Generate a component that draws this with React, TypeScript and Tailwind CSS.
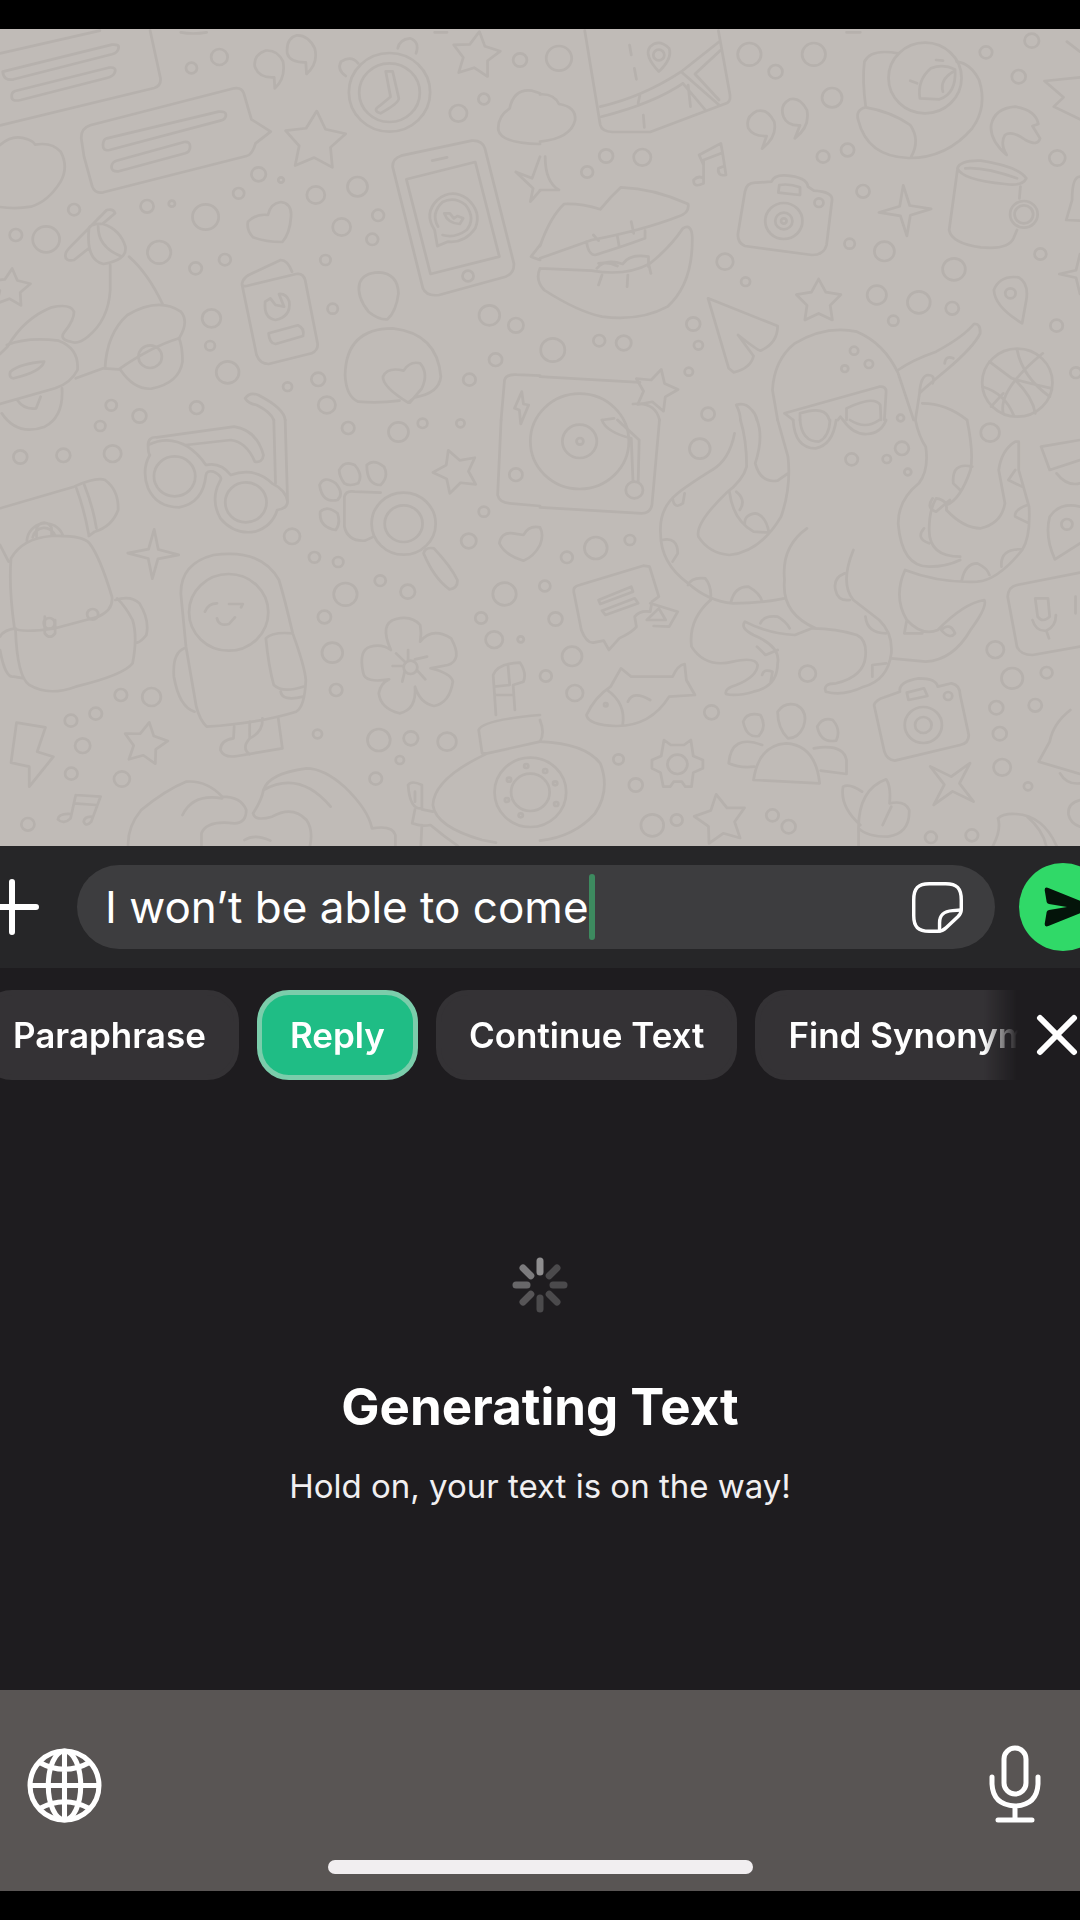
import { FC } from "react"
import { clsx } from "clsx"

type TDot = [number, number, number]
type TShape = [number, number, number, number]

type TTile = {
  x: number
  y: number
  dots: TDot[]
  stars: TShape[]
  sparkles: TShape[]
  paths: string[]
}

const starPath = ([cx, cy, r, rot]: TShape) => {
  const points = Array.from({ length: 10 }, (_, i) => {
    const angle = ((i * 36 + rot - 90) * Math.PI) / 180
    const radius = i % 2 ? r * 0.52 : r
    return `${cx + radius * Math.cos(angle)} ${cy + radius * Math.sin(angle)}`
  })
  return `M${points.join("L")}Z`
}

const sparklePath = ([cx, cy, r, rot]: TShape) => {
  const points = Array.from({ length: 8 }, (_, i) => {
    const angle = ((i * 45 + rot - 90) * Math.PI) / 180
    const radius = i % 2 ? r * 0.27 : r
    return `${cx + radius * Math.cos(angle)} ${cy + radius * Math.sin(angle)}`
  })
  return `M${points.join("L")}Z`
}

// wallpaper doodles, four tiles of 1568 x 1260 units
const tiles: TTile[] = [
  {
    x: 0,
    y: 0,
    dots: [
      [556, 204, 16], [637, 171, 24], [1331, 340, 25], [1405, 297, 16], [1510, 180, 20], [751, 523, 21],
      [816, 540, 8], [693, 580, 16], [917, 585, 26], [1038, 560, 29], [499, 611, 9], [427, 619, 19],
      [215, 629, 17], [46, 705, 18], [134, 718, 39], [597, 651, 38], [462, 757, 34], [992, 681, 26],
      [1098, 646, 17], [1081, 718, 17], [568, 805, 18], [653, 779, 17], [945, 780, 15], [614, 955, 27],
      [966, 926, 15], [610, 1037, 14], [661, 1117, 33], [924, 1138, 20], [835, 1160, 13], [949, 1215, 25],
      [1421, 946, 30], [1498, 976, 22], [1439, 1079, 19], [1363, 1139, 18], [323, 1216, 16], [571, 1223, 19],
      [405, 1248, 20], [436, 1070, 34], [1131, 277, 118], [1131, 278, 88], [1359, 828, 16],
    ],
    stars: [[915, 425, 92, 3], [1382, 166, 72, 8], [30, 865, 60, 5]],
    sparkles: [],
    paths: [
      "M0 160L290 92M436 92L466 235Q468 258 448 264L0 376",
      "M8 215L325 134Q348 132 344 145Q342 158 325 163L40 238Q10 244 8 215ZM44 273L315 203Q342 200 332 220Q328 230 310 234L60 300Q34 306 34 290Q33 277 44 273Z",
      "M236 415Q235 385 262 376L680 265Q702 262 708 280L730 358L786 395L742 430Q732 465 716 468L300 577Q276 582 268 560L244 470Z",
      "M310 415L635 335Q656 333 656 345Q656 358 640 362L318 450Q298 454 299 435Q300 418 310 415ZM338 482L535 426Q552 424 552 440Q552 455 538 460L345 514Q322 516 324 498Q326 486 338 482Z",
      "M0 435Q38 400 80 418Q96 424 102 434Q150 425 176 455Q200 500 176 545Q140 605 90 620Q45 628 0 621",
      "M798 265Q830 235 822 185Q805 148 770 152Q735 165 740 200Q752 235 796 232ZM890 222Q925 190 914 145Q895 105 862 106Q830 115 834 160Q842 188 888 187Z",
      "M1040 190Q1020 165 990 185Q978 210 1004 228M1155 145Q1160 118 1190 115Q1220 125 1208 160M1120 214H1140L1158 295Q1158 310 1105 340Q1080 332 1102 318L1134 290Z",
      "M1140 500Q1140 475 1165 467L1370 422Q1400 420 1408 445L1492 790Q1494 820 1468 830L1275 885Q1238 890 1228 865ZM1180 538L1380 486L1450 770L1250 822ZM1255 482L1298 472",
      "M1270 738L1262 690Q1230 640 1270 600Q1310 565 1355 595Q1400 635 1380 685Q1350 730 1300 725ZM1272 680Q1250 640 1285 606Q1320 588 1352 615Q1382 655 1355 690Q1320 716 1285 705",
      "M1290 640Q1300 670 1335 672L1345 655L1328 648L1318 655L1306 640Z",
      "M1568 432Q1455 430 1447 390Q1444 350 1480 325Q1492 265 1545 272L1568 280",
      "M720 665Q745 640 778 645Q785 610 815 606Q848 610 845 650Q842 700 820 726Q770 726 735 712Q715 690 720 665Z",
      "M703 855L745 1065Q755 1092 780 1092L905 1060Q925 1050 922 1030L886 840Q880 818 860 822L716 858Q702 860 703 850Q706 835 722 825L815 780Q835 780 848 815",
      "M770 905Q765 955 800 960Q845 950 840 905Q832 880 810 882L825 920L800 915L785 895ZM780 1000L865 976Q885 985 880 1008L800 1032Q782 1030 780 1000Z",
      "M1100 817Q1155 820 1157 880Q1150 935 1125 958Q1100 960 1070 935Q1035 890 1044 850Q1055 818 1100 817Z",
      "M1040 1205Q1005 1190 1002 1125Q1005 985 1140 985Q1270 1000 1280 1130Q1275 1180 1205 1192L1185 1208Q1110 1160 1112 1130Q1125 1100 1172 1112Q1190 1082 1220 1090Q1245 1120 1225 1165L1190 1208M1040 1205Q1100 1210 1160 1202",
      "M190 765Q190 755 205 740L310 630Q330 625 334 640L300 670M190 765Q188 785 215 780L258 745M258 690Q250 780 300 792Q370 780 364 740Q350 690 300 672Q255 670 258 690ZM285 680Q285 740 350 768",
      "M320 795V870Q315 960 255 1010Q225 1035 205 1025Q170 1018 188 995Q215 960 215 935Q205 910 150 922Q70 955 22 1040L0 1062M375 770Q430 820 472 912M305 1105Q310 1000 370 945Q460 890 525 935Q550 965 520 1015Q440 1040 345 1108L300 1105L220 1135",
      "M20 1035Q80 1010 170 1022Q230 1045 225 1110Q205 1150 160 1165L0 1212M30 1115Q60 1090 128 1085Q120 1115 40 1135Q25 1135 30 1115ZM350 1110Q390 1170 440 1166Q520 1150 530 1085Q530 1040 520 1015M180 1165Q185 1250 130 1280Q50 1310 5 1240M50 1200Q70 1230 105 1225L118 1190",
      "M712 1195Q725 1175 750 1185Q825 1225 828 1260M712 1195Q720 1210 745 1215Q785 1235 795 1260",
      "M1455 1260L1465 1140Q1470 1122 1500 1124L1568 1127M1515 1175L1494 1225L1508 1230L1512 1272L1535 1215L1520 1212Z",
      "M1498 516L1545 535L1568 470M1498 516L1548 565L1540 605L1568 572M1568 735L1542 770L1568 780",
      "M525 97Q560 104 600 97M1262 97H1298",
    ],
  },
  {
    x: 1568,
    y: 0,
    dots: [
      [55, 175, 37], [192, 468, 20], [137, 516, 17], [297, 472, 25], [608, 163, 34], [684, 215, 20],
      [795, 163, 34], [848, 293, 29], [822, 470, 18], [893, 450, 19], [938, 574, 19], [899, 731, 15],
      [1000, 754, 29], [537, 785, 24], [597, 845, 13], [1202, 808, 33], [978, 885, 28], [1100, 907, 33],
      [1197, 925, 19], [1026, 962, 15], [1502, 474, 23], [1453, 762, 17], [1428, 122, 21], [1295, 157, 18],
      [1390, 230, 20], [1500, 977, 18], [445, 972, 20], [172, 1022, 17], [243, 1029, 22], [37, 1050, 35],
      [460, 1036, 13], [432, 1115, 12], [488, 1242, 19], [1556, 1118, 16], [1118, 234, 106], [708, 663, 54],
      [708, 663, 25], [708, 663, 8], [810, 608, 13], [1405, 643, 40], [1405, 643, 27], [1386, 1148, 102],
      [345, 165, 16], [1366, 880, 15], [912, 1052, 12], [885, 1106, 10], [955, 1092, 12], [1047, 1254, 10],
    ],
    stars: [[809, 905, 68, 0], [335, 1172, 66, 15]],
    sparkles: [[1060, 632, 76, -4], [1568, 822, 60, 0]],
    paths: [
      "M130 92L175 375Q180 395 210 396H320L545 308Q556 300 550 275L518 92M175 320Q300 290 410 215L520 125M178 350Q330 310 415 250M415 250L480 330M410 215L520 315M525 150L450 222L520 300M260 135L265 165M274 205L280 238M300 345L303 382M430 255L437 320M290 285L285 310",
      "M345 215Q300 165 320 140Q345 115 375 145Q385 175 345 215Z",
      "M0 283Q40 280 55 312Q105 320 102 360Q90 415 0 425M15 470Q15 545 55 570H0",
      "M1040 160Q960 145 942 185Q935 240 946 322Q915 330 924 360Q950 470 1070 474Q1180 475 1255 385Q1300 320 1275 240Q1250 190 1210 185M946 322Q1020 335 1075 375Q1105 420 1078 470M1103 295Q1095 240 1135 205Q1170 190 1205 208Q1210 280 1160 298ZM1170 275Q1160 240 1200 215M1075 242L1095 250M1150 180L1170 182",
      "M645 446Q690 410 680 365Q660 325 630 333Q595 350 605 385Q620 410 658 408ZM740 415Q785 380 775 330Q755 290 725 298Q695 315 707 350Q718 378 755 376Z",
      "M475 550V480L530 458L540 525M475 550Q445 565 446 540Q460 525 475 535M462 465L525 430L530 458M462 465L475 495M540 525Q515 530 518 505L530 500",
      "M0 738Q30 650 70 612Q120 610 175 628Q205 590 235 562Q330 565 430 612Q435 640 400 650Q300 690 150 720L0 775M0 805L150 812Q250 830 320 790Q380 740 415 685Q440 670 442 710Q445 850 370 920Q290 965 180 950Q110 935 12 870Q-15 840 0 805M135 725Q140 765 160 765Q240 740 305 715V692M225 710L230 740M265 665L272 700M155 705L170 722M165 805Q190 775 240 792Q260 760 315 770V800M180 825L170 855M255 825L253 860M315 790L322 820M170 790Q200 785 225 798",
      "M595 575Q600 545 630 548L672 545Q680 525 710 526Q775 530 778 560L795 572Q850 575 848 600L832 735Q825 765 790 765L595 738Q572 728 575 700ZM695 555Q725 550 755 562V585L692 578Z",
      "M1310 375Q1320 325 1380 320Q1440 330 1447 372L1430 378L1452 415Q1445 440 1410 420Q1370 390 1350 405Q1335 430 1355 465Q1305 420 1310 375Z",
      "M1212 505Q1220 480 1280 482Q1390 500 1412 535Q1400 560 1350 552Q1225 540 1212 505ZM1235 505Q1290 500 1385 535M1212 510L1188 690Q1195 730 1280 742Q1360 750 1375 715L1385 690M1395 560L1392 595",
      "M1568 530Q1545 530 1545 600L1528 660L1568 662M1568 232L1465 243L1520 292L1492 320L1568 358M1530 125L1568 155",
      "M488 895L690 978Q690 1030 640 1052Q630 1050 575 1005L620 1068Q612 1105 562 1117L548 1105Z",
      "M1400 970Q1320 920 1318 870Q1335 825 1390 832Q1420 850 1412 900Z",
      "M690 1260L675 1170Q680 1080 740 1030Q830 975 920 995Q1000 1030 1040 1120L1085 1260M710 1240L985 1160Q1005 1158 1005 1175L1000 1260M710 1240L735 1260M755 1260V1240Q830 1215 840 1260M890 1260V1225Q970 1185 988 1215L990 1260M865 1260L872 1250L880 1260",
      "M1040 1110Q1080 1080 1150 1055Q1230 1010 1260 972Q1280 970 1278 1000Q1260 1040 1180 1110Q1110 1170 1102 1180Q1105 1130 1125 1125Q1150 1125 1140 1150M1175 1090Q1178 1065 1200 1075M1102 1180L1090 1260M1110 1210Q1180 1210 1240 1260",
      "M1305 1085L1370 1135Q1400 1145 1485 1165M1385 1048Q1400 1130 1480 1190M1345 1240Q1330 1170 1460 1060M1285 1160Q1350 1180 1375 1245M1380 1140Q1430 1190 1438 1240M1310 1220L1345 1180",
      "M0 1130L290 1147M270 1212Q335 1205 347 1260M570 1215Q595 1205 615 1230Q628 1245 630 1260M570 1215Q582 1240 582 1260M180 1260L215 1255M890 97H930",
    ],
  },
  {
    x: 0,
    y: 1260,
    dots: [
      [291, 18, 15], [59, 111, 20], [184, 106, 20], [327, 101, 25], [1011, 24, 18], [1157, 36, 29],
      [1227, 10, 14], [1337, 10, 12], [1498, 164, 19], [848, 349, 23], [913, 412, 16], [982, 426, 15],
      [1003, 523, 34], [1104, 482, 16], [1184, 515, 21], [1361, 363, 22], [1405, 275, 15], [942, 591, 19],
      [965, 698, 30], [976, 810, 18], [1465, 522, 34], [1397, 594, 17], [1435, 659, 25], [1512, 658, 9],
      [351, 825, 18], [440, 831, 27], [278, 881, 18], [206, 902, 18], [240, 977, 22], [207, 1061, 18],
      [354, 1077, 23], [81, 1213, 19], [922, 942, 13], [1100, 960, 33], [1193, 955, 21], [1298, 965, 27],
      [1161, 1020, 12], [1091, 1076, 18], [507, 169, 60], [714, 247, 60], [1172, 311, 55], [1172, 311, 93],
      [664, 577, 115], [269, 583, 16], [1192, 742, 20], [143, 610, 16],
      // rotary dial
      [1540, 1117, 104], [1540, 1117, 56], [1528, 1038, 6], [1478, 1079, 6], [1472, 1140, 6], [1512, 1186, 6],
    ],
    stars: [[1325, 155, 68, -20], [422, 972, 66, 10]],
    sparkles: [[445, 402, 74, 2]],
    paths: [
      "M430 75Q430 50 455 52L680 20Q745 30 765 105Q762 130 740 125Q715 65 670 60L540 75M430 75Q430 100 435 105Q410 150 430 205Q455 262 520 262Q590 250 598 165Q600 150 620 155Q650 170 638 185Q610 240 640 295Q680 345 740 335Q790 320 805 270Q835 265 835 245L828 0M430 75Q490 45 545 80Q575 100 598 135Q640 125 670 165Q740 140 790 190Q830 210 835 245M795 0L800 190",
      "M0 265L215 200Q280 170 305 180Q345 210 343 270Q325 320 275 335L258 348M222 205Q245 270 258 345M245 195Q270 260 280 325M78 362A54 56 0 0 1 182 345M95 352A34 36 0 0 1 160 347M106 350V330A22 22 0 0 1 150 330V347",
      "M32 415Q65 355 150 348Q240 345 260 370Q290 410 325 530Q330 570 285 590L160 625Q60 640 42 625Q25 500 32 415ZM45 630Q50 770 85 795Q140 830 220 800Q360 765 385 730Q400 650 385 600Q365 560 340 535M335 540Q380 525 405 550Q435 600 425 645Q410 665 398 668M45 625Q10 630 0 650M0 690Q15 775 40 770L70 775M0 375L25 425M130 590V640Q145 660 160 640V600",
      "M525 520Q525 430 620 405Q760 385 810 480Q825 530 850 640Q885 740 888 780Q885 860 860 875Q750 910 600 920Q580 900 570 860L540 680ZM535 685Q500 700 505 770Q520 860 565 875M850 640Q790 635 772 655Q780 740 795 795Q820 820 880 800M815 815Q820 845 880 830M595 575Q605 550 630 550M665 552H705L700 562M630 595Q635 620 665 612L682 592M680 920L678 955Q640 960 640 990Q650 1015 690 1008L820 985L808 895M725 905V955Q765 935 762 895M725 955Q700 985 725 1003",
      "M1000 230Q1005 210 1030 215L1105 218M1000 230V320Q1010 365 1060 362L1085 350M985 150Q1000 120 1030 135Q1055 165 1040 190Q1015 200 1000 190Q985 170 985 150ZM1065 135Q1085 115 1115 140Q1130 170 1105 195Q1065 195 1065 135ZM928 195Q940 165 975 190Q1000 220 980 240Q935 250 928 195ZM930 275Q950 255 980 280Q990 310 975 330Q925 320 930 275ZM1230 400Q1235 380 1260 385Q1310 440 1328 480Q1330 505 1305 508Q1260 475 1230 400Z",
      "M1135 690Q1100 610 1150 597Q1195 585 1220 615Q1225 640 1220 665Q1255 620 1310 655Q1345 720 1300 735L1250 745Q1310 760 1315 785Q1305 850 1260 858Q1220 850 1205 800Q1210 870 1160 880Q1105 865 1100 820Q1105 790 1130 778Q1060 790 1055 760Q1040 690 1075 680Q1110 670 1135 690ZM1185 690V720M1205 718L1240 710M1212 752L1235 778M1175 755L1168 785M1140 738H1170M1150 700L1178 728",
      "M1450 370Q1455 335 1490 340L1520 345Q1535 315 1568 322Q1580 345 1568 375Q1550 410 1520 422Q1465 405 1450 370ZM1455 0L1445 225Q1450 248 1480 250L1568 258",
      "M48 908L132 922L108 995L155 1010L85 1100V1040L32 1028ZM220 1125L292 1130L265 1205Q250 1222 243 1205Q245 1190 265 1190M220 1125L205 1195Q185 1215 168 1198Q170 1180 205 1182M215 1150L280 1155",
      "M372 1278Q370 1220 410 1170Q480 1110 540 1085Q600 1080 645 1130Q700 1130 715 1170Q715 1210 680 1210Q600 1200 585 1240V1278M645 1135Q560 1120 530 1185M735 1180Q760 1140 765 1110Q780 1060 890 1045Q940 1045 1000 1100Q1070 1170 1080 1225Q1140 1215 1148 1245V1278M765 1110Q870 1050 960 1160M735 1180Q740 1205 790 1190Q850 1155 890 1200Q910 1230 900 1278M710 1260Q740 1240 785 1262",
      "M1440 885L1432 765Q1445 730 1510 728Q1530 760 1520 785L1490 795L1495 870M1475 735L1480 795L1435 800M1440 825H1490M1390 930Q1400 900 1568 885M1390 930L1400 1000L1415 1000L1568 965M1415 1000Q1260 1075 1257 1155Q1265 1220 1400 1260L1440 1268M1185 1095Q1195 1080 1225 1095V1165Q1190 1170 1185 1095ZM1205 1115V1145M1205 1168L1197 1210Q1220 1220 1250 1215Q1290 1250 1330 1278M1257 1175L1225 1168M1225 1215L1222 1278",
    ],
  },
  {
    x: 1568,
    y: 1260,
    dots: [
      [115, 64, 50], [116, 64, 10], [115, 64, 143], [464, 86, 30], [905, 118, 18], [1007, 117, 12], [1051, 85, 20],
      [1068, 156, 10], [1307, 38, 27], [162, 384, 33], [261, 360, 15], [78, 412, 17], [14, 498, 16],
      [45, 597, 20], [93, 709, 29], [101, 819, 24], [17, 768, 17], [498, 877, 21], [228, 1018, 15],
      [278, 1095, 20], [326, 1216, 33], [397, 1200, 17], [675, 1186, 18], [722, 1220, 20], [777, 761, 24],
      [1322, 689, 25], [1371, 775, 31], [1471, 758, 17], [1325, 863, 20], [1438, 856, 19], [1335, 941, 20],
      [1342, 1042, 25], [1417, 1099, 12], [1135, 1252, 17], [1254, 1246, 18], [1113, 915, 54], [1113, 915, 24],
      [1185, 828, 12], [399, 1033, 29], [1530, 313, 16], [15, 1053, 6], [44, 1090, 6], [47, 1152, 6], [191, 854, 5],
      [274, 210, 25],
    ],
    stars: [[525, 1200, 78, -10]],
    sparkles: [[1196, 1092, 82, 40]],
    paths: [
      "M347 0L325 255Q320 280 295 280L0 262M180 0Q190 35 265 55L270 185M225 0L288 60L285 185",
      "M565 40Q550 120 500 150Q430 195 400 220Q345 265 350 340Q350 430 430 490Q490 545 560 550Q640 550 710 535M582 0Q600 60 600 140Q590 180 540 220Q450 310 460 350Q490 400 550 405Q640 395 700 290Q730 200 720 110L690 0M630 0Q650 50 625 130Q640 190 690 182L720 160M550 215Q560 300 620 335L665 338Q655 285 625 280Q590 285 595 315M570 215Q600 240 580 270M385 235Q390 270 415 250L420 220M355 360Q400 350 400 400L385 425M430 495Q440 470 480 475Q500 500 495 540M555 545Q565 500 605 500Q640 520 645 545",
      "M775 325Q700 380 710 480Q700 580 800 625M910 390Q870 490 910 540L985 600Q1025 640 1020 700Q1010 780 940 800Q880 830 830 815Q820 790 860 790Q940 770 945 710Q950 660 920 645Q860 625 790 625L740 645Q660 640 595 605Q580 625 620 645Q700 680 690 730Q690 800 620 815Q570 830 540 822Q535 805 570 795Q630 770 632 735Q625 710 560 725Q480 745 440 680Q430 600 495 540M640 610Q650 585 690 590Q715 605 725 625M885 460Q850 475 858 510Q865 545 900 540M945 590Q950 640 1005 640M630 680L655 705L690 690M645 765Q650 745 675 755L670 785M965 770V735L1005 730",
      "M1090 0Q1100 50 1120 80Q1130 150 1100 190Q1040 240 1040 310Q1050 440 1130 440Q1180 440 1220 420M1220 410Q1130 410 1130 330Q1130 270 1150 235Q1185 240 1180 270Q1230 325 1280 325Q1340 310 1350 250L1332 150Q1340 90 1380 65L1390 65V150L1420 260Q1425 350 1400 390Q1330 480 1270 485Q1160 490 1060 450Q1025 530 1065 600Q1110 650 1155 630Q1230 550 1290 540Q1300 560 1250 630Q1200 720 1120 725L1020 715M1240 0Q1260 100 1250 150Q1220 240 1180 255M1255 140Q1195 125 1200 190L1220 210M1225 480Q1235 430 1270 430Q1300 445 1305 465M1340 440Q1335 385 1400 388M1415 255Q1375 270 1380 290L1420 310M1115 325Q1090 355 1130 370M1058 640L1065 600M1058 640H1110M1165 630Q1190 605 1205 640Q1190 660 1165 630M1380 150L1360 180L1400 200M1140 235Q1120 265 1150 275L1190 240",
      "M735 0Q740 85 800 85Q850 75 860 0M755 0Q760 65 810 65Q840 50 842 0M880 0Q910 45 950 42Q990 40 1005 0M900 0Q945 30 985 0",
      "M1455 80L1568 60M1455 80L1480 150L1568 120M1500 160Q1530 200 1568 190M1495 418Q1465 350 1480 290Q1510 245 1568 260M1495 418Q1530 395 1568 370M1358 530Q1360 500 1385 495L1568 458M1358 530L1385 680Q1395 705 1430 705L1568 680M1438 535H1475L1480 590Q1460 610 1445 590ZM1430 600Q1440 635 1470 632Q1498 620 1498 585M1470 632L1478 655M1555 530V580",
      "M98 515L120 630Q135 670 155 668L185 662L200 690L230 655Q270 635 280 620L275 590Q290 570 320 575L325 545L345 530L318 440L300 437L115 495Q95 500 98 515ZM170 540L265 500L270 515L175 552ZM180 572L275 535L285 550L190 585ZM320 550L400 575L375 620L330 618M310 600L345 565L365 600Z",
      "M135 885Q160 830 205 800L235 745L265 770L385 770Q400 735 420 732L425 780L450 825L375 830Q320 920 220 918Q140 915 135 885ZM195 810Q250 850 240 915M255 845Q270 810 320 840",
      "M360 960L380 975H418L438 960L445 1008L473 1020V1045L445 1058L440 1100H422L412 1085H388L378 1100H358L350 1058L325 1045V1020L352 1008Z",
      "M0 965Q130 970 175 1030Q205 1110 160 1180Q100 1250 0 1262M0 900Q15 940 0 965",
      "M690 875Q710 845 745 855Q780 875 765 920Q750 955 720 955Q690 925 690 875ZM590 905Q600 875 640 885Q660 920 635 948Q600 955 590 905ZM805 920Q820 890 850 900Q875 930 860 962Q815 970 805 920ZM620 1080Q635 975 715 970Q800 975 812 1090ZM645 975Q555 940 548 1030Q580 1045 622 1040M795 985Q880 970 890 1020V1062L815 1052",
      "M970 855Q975 840 1000 832L1045 815Q1040 785 1100 775Q1150 775 1155 800L1195 790Q1220 795 1220 825L1245 945Q1245 970 1220 975L1030 1022Q1008 1020 1000 995ZM1065 818L1115 805L1125 828L1070 840Z",
      "M1540 870Q1490 910 1480 965L1448 1025L1568 1062M1510 1060Q1530 1095 1568 1090M1568 1140Q1530 1150 1535 1185Q1540 1210 1568 1220",
      "M930 1215Q870 1160 880 1100Q900 1090 935 1115M925 1240Q920 1110 1005 1078Q1020 1100 1015 1150Q1060 1140 1072 1170Q1075 1240 1010 1250Q950 1250 925 1225V1278M995 1215L1020 1160M1330 1195Q1345 1180 1380 1182Q1460 1185 1500 1278M1330 1195Q1340 1230 1315 1278M1415 1190Q1460 1230 1470 1278",
    ],
  },
]

const actions = [
  { id: 1, label: "Paraphrase" },
  { id: 2, label: "Reply", active: true },
  { id: 3, label: "Continue Text" },
  { id: 4, label: "Find Synonyms" },
]

const blades = [0.5, 0.2, 0.2, 0.2, 0.2, 0.25, 0.33, 0.42]

const WallpaperUI: FC = () => (
  <svg
    viewBox="0 29 1080 817"
    preserveAspectRatio="xMidYMid slice"
    className="absolute inset-0 size-full fill-none stroke-[#b6b1ad] stroke-[8]"
    strokeLinejoin="round"
    strokeLinecap="round"
    aria-hidden="true"
  >
    <g transform="scale(0.34439 0.33333)">
      {tiles.map(({ x, y, dots, stars, sparkles, paths }) => (
        <g key={`${x}-${y}`} transform={`translate(${x} ${y})`}>
          {dots.map(([cx, cy, r], i) => <circle key={i} cx={cx} cy={cy} r={r} />)}
          {stars.map((star, i) => <path key={i} d={starPath(star)} />)}
          {sparkles.map((sparkle, i) => <path key={i} d={sparklePath(sparkle)} />)}
          {paths.map((d, i) => <path key={i} d={d} />)}
        </g>
      ))}
    </g>
  </svg>
)

const ComposerUI: FC = () => (
  <form className="flex items-center bg-[#262628] py-[17px]" onSubmit={(e) => e.preventDefault()}>
    <button type="button" aria-label="Attach" className="-ml-[15px] mr-[38px] shrink-0">
      <svg viewBox="0 0 54 56" className="h-[56px] w-[54px] fill-none stroke-white stroke-[6]" strokeLinecap="round">
        <path d="M27 3V53M3 28H51" />
      </svg>
    </button>
    <div className="flex h-[84px] min-w-0 flex-1 items-center rounded-full bg-[#3d3d3f] pl-[28px] pr-8">
      <input
        aria-label="Message"
        defaultValue="I won’t be able to come"
        className="field-sizing-content min-w-0 bg-transparent text-[44px] text-white outline-none"
      />
      <span className="h-[66px] w-[6px] shrink-0 rounded-full bg-[#3d8a5f]" />
      <button type="button" aria-label="Stickers" className="ml-auto shrink-0">
        <svg viewBox="0 0 148 148" className="size-[51px] fill-none stroke-white stroke-[10]" strokeLinecap="round" strokeLinejoin="round">
          <path d="M143 78V52C143 18 130 5 98 5H50C18 5 5 18 5 52V98C5 130 18 143 50 143H75C85 143 92 140 99 133L133 101C140 94 143 88 143 78Z" />
          <path d="M142 81L118 83C92 85 80 95 80 118V142" />
        </svg>
      </button>
    </div>
    <button aria-label="Send" className="-mr-[27px] ml-6 size-[88px] shrink-0 rounded-full bg-[#30d968]">
      <svg viewBox="0 0 264 264" className="size-full fill-[#04140a]">
        <path d="M77 81Q77 71 88 75L214 126Q226 132 214 138L88 189Q77 193 77 183L83 147Q84 142 90 141L144 132L90 123Q84 122 83 117Z" />
      </svg>
    </button>
  </form>
)

const ActionsUI: FC = () => (
  <div className="flex items-center gap-[18px] pt-[22px]">
    <div className="-ml-5 flex min-w-0 flex-1 gap-[18px] overflow-hidden [mask-image:linear-gradient(to_left,transparent,black_34px)]">
      {actions.map(({ id, label, active }) => (
        <button
          key={id}
          className={clsx(
            "h-[90px] shrink-0 rounded-[32px] border-[5px] px-[28px] text-[35px] font-semibold text-white",
            active ? "border-[#7bcdab] bg-[#1fbd85]" : "border-[#343235] bg-[#343235]"
          )}
        >
          {label}
        </button>
      ))}
    </div>
    <button aria-label="Close" className="mr-[2px] shrink-0">
      <svg viewBox="0 0 42 42" className="size-[42px] fill-none stroke-white stroke-[6]" strokeLinecap="round">
        <path d="M4 4L38 38M38 4L4 38" />
      </svg>
    </button>
  </div>
)

const SpinnerUI: FC = () => (
  <svg viewBox="-28 -28 56 56" className="size-[56px] stroke-white stroke-[7]" strokeLinecap="round" aria-hidden="true">
    {blades.map((opacity, i) => (
      <path key={i} d="M0 -13V-24" opacity={opacity} transform={`rotate(${i * 45})`} />
    ))}
  </svg>
)

const KeyboardBarUI: FC = () => (
  <footer className="flex flex-col items-center bg-[#595554] px-[27px] pb-[17px] pt-[55px]">
    <div className="flex w-full items-end justify-between pr-3">
      <button aria-label="Next keyboard">
        <svg viewBox="0 0 74 74" className="size-[75px] fill-none stroke-white stroke-[5]">
          <circle cx="37" cy="37" r="34" />
          <ellipse cx="37" cy="37" rx="16" ry="34" />
          <path d="M37 3V71M3 37H71M12 14Q37 28 62 14M12 60Q37 46 62 60" />
        </svg>
      </button>
      <button aria-label="Dictate">
        <svg viewBox="0 0 52 78" className="h-[78px] w-[52px] fill-none stroke-white stroke-[5]" strokeLinecap="round">
          <rect x="15" y="3" width="22" height="46" rx="11" />
          <path d="M3 32V39Q4 60 26 61Q48 60 49 39V32M26 61V75M9 75H43" />
        </svg>
      </button>
    </div>
    <div className="mt-[37px] h-[14px] w-[425px] max-w-full rounded-full bg-[#f1eef0]" />
  </footer>
)

export default function App() {
  return (
    <div className="flex min-h-screen flex-col overflow-x-clip bg-black py-[29px] font-['Inter',sans-serif]">
      <main className="flex flex-1 flex-col">
        <section aria-label="Chat" className="relative min-h-80 flex-1 overflow-hidden bg-[#c0bbb7]">
          <WallpaperUI />
        </section>
        <ComposerUI />
        <section className="bg-[#1e1c1f] pb-[180px]">
          <ActionsUI />
          <div className="flex flex-col items-center pt-[177px] text-center text-white" role="status">
            <SpinnerUI />
            <h1 className="mt-[60px] text-[51px] font-bold leading-[68px]">Generating Text</h1>
            <p className="mt-[21px] text-[33px] leading-[48px] text-[#f1eff1]">Hold on, your text is on the way!</p>
          </div>
        </section>
      </main>
      <KeyboardBarUI />
    </div>
  )
}
